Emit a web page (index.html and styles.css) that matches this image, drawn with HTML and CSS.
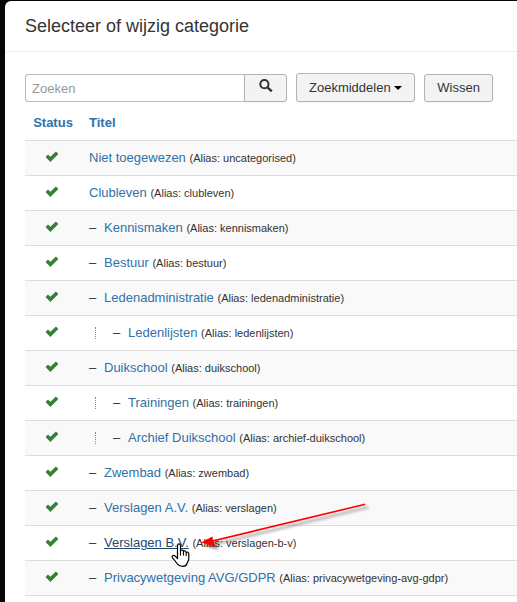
FILE: index.html
```html
<!DOCTYPE html>
<html lang="nl">
<head>
    <meta charset="UTF-8">
    <meta name="viewport" content="width=device-width, initial-scale=1.0">
    <title>Selecteer of wijzig categorie</title>
    <link rel="stylesheet" href="styles.css">
</head>
<body>

<!-- Check icon, used in every row -->
<svg class="sprite" aria-hidden="true">
    <symbol id="check" viewBox="0 0 14 12">
        <path d="M0.5 5.9 L3 3.4 L5.4 5.8 L10.9 0.6 L13.4 3 L5.4 10.9 Z" fill="#378137"/>
    </symbol>
</svg>

<div class="modal">
    <div class="modal-header">
        <h3>Selecteer of wijzig categorie</h3>
    </div>

    <div class="modal-body">
        <form class="filter-bar" onsubmit="return false">
            <div class="input-append">
                <input type="text" class="search-input" placeholder="Zoeken" aria-label="Zoeken">
                <button type="submit" class="btn btn-search" aria-label="Zoeken">
                    <svg width="14" height="14" viewBox="0 0 14 14" aria-hidden="true">
                        <circle cx="5.4" cy="5.2" r="4.1" fill="none" stroke="#333" stroke-width="2"/>
                        <path d="M8.5 8.3 L12.8 12.3" fill="none" stroke="#333" stroke-width="2.4"/>
                    </svg>
                </button>
            </div>
            <button type="button" class="btn btn-tools">Zoekmiddelen <span class="caret"></span></button>
            <button type="button" class="btn btn-clear">Wissen</button>
        </form>

        <table class="table">
            <thead>
                <tr>
                    <th class="status"><a href="#">Status</a></th>
                    <th><a href="#">Titel</a></th>
                </tr>
            </thead>
            <tbody>
                <tr>
                    <td class="status"><svg class="icon-check"><use href="#check"/></svg></td>
                    <td><a href="#">Niet toegewezen</a> <span class="small">(Alias: uncategorised)</span></td>
                </tr>
                <tr>
                    <td class="status"><svg class="icon-check"><use href="#check"/></svg></td>
                    <td><a href="#">Clubleven</a> <span class="small">(Alias: clubleven)</span></td>
                </tr>
                <tr>
                    <td class="status"><svg class="icon-check"><use href="#check"/></svg></td>
                    <td><span class="dash">–</span><a href="#">Kennismaken</a> <span class="small">(Alias: kennismaken)</span></td>
                </tr>
                <tr>
                    <td class="status"><svg class="icon-check"><use href="#check"/></svg></td>
                    <td><span class="dash">–</span><a href="#">Bestuur</a> <span class="small">(Alias: bestuur)</span></td>
                </tr>
                <tr>
                    <td class="status"><svg class="icon-check"><use href="#check"/></svg></td>
                    <td><span class="dash">–</span><a href="#">Ledenadministratie</a> <span class="small">(Alias: ledenadministratie)</span></td>
                </tr>
                <tr>
                    <td class="status"><svg class="icon-check"><use href="#check"/></svg></td>
                    <td><span class="level"></span><span class="dash">–</span><a href="#">Ledenlijsten</a> <span class="small">(Alias: ledenlijsten)</span></td>
                </tr>
                <tr>
                    <td class="status"><svg class="icon-check"><use href="#check"/></svg></td>
                    <td><span class="dash">–</span><a href="#">Duikschool</a> <span class="small">(Alias: duikschool)</span></td>
                </tr>
                <tr>
                    <td class="status"><svg class="icon-check"><use href="#check"/></svg></td>
                    <td><span class="level"></span><span class="dash">–</span><a href="#">Trainingen</a> <span class="small">(Alias: trainingen)</span></td>
                </tr>
                <tr>
                    <td class="status"><svg class="icon-check"><use href="#check"/></svg></td>
                    <td><span class="level"></span><span class="dash">–</span><a href="#">Archief Duikschool</a> <span class="small">(Alias: archief-duikschool)</span></td>
                </tr>
                <tr>
                    <td class="status"><svg class="icon-check"><use href="#check"/></svg></td>
                    <td><span class="dash">–</span><a href="#">Zwembad</a> <span class="small">(Alias: zwembad)</span></td>
                </tr>
                <tr>
                    <td class="status"><svg class="icon-check"><use href="#check"/></svg></td>
                    <td><span class="dash">–</span><a href="#">Verslagen A.V.</a> <span class="small">(Alias: verslagen)</span></td>
                </tr>
                <tr>
                    <td class="status"><svg class="icon-check"><use href="#check"/></svg></td>
                    <td class="pointed">
                        <span class="dash">–</span><a href="#" class="hovered">Verslagen B.V.</a> <span class="small">(Alias: verslagen-b-v)</span>
                        <!-- Arrow pointing at the hovered category -->
                        <svg class="arrow" width="180" height="56" viewBox="0 0 180 56" aria-hidden="true">
                            <defs>
                                <filter id="shadow" x="-10%" y="-20%" width="120%" height="150%">
                                    <feDropShadow dx="3" dy="3" stdDeviation="1.5" flood-color="#000" flood-opacity="0.45"/>
                                </filter>
                            </defs>
                            <g filter="url(#shadow)">
                                <path d="M11 40.2 L164 3.6 L164.5 5 L11 42 Z" fill="#f00"/>
                                <path d="M0 42.5 L11.5 36.5 L12 41 L14.5 46.5 Z" fill="#f00"/>
                            </g>
                        </svg>
                        <!-- Mouse pointer -->
                        <svg class="pointer" width="19" height="24" viewBox="0 0 19 24" aria-hidden="true">
                            <path d="M6.5 15.5 V2.6 C6.5 0.2 9.5 0.2 9.5 2.6 V7.8 C10.2 6.6 12.3 6.8 12.5 8.4 C13.4 7.5 15 8 15.2 9.4 C16.3 8.7 17.8 9.4 17.8 11 V15.5 C17.8 18 16.3 19 16 20.5 C15.5 22.4 14 23.3 11.8 23.3 C8 23.3 7 22.3 5.6 20 C4.2 17.7 3 16.3 1.5 14.8 C0.2 13.2 2.3 11.6 4 12.9 Z" fill="#fff" stroke="#000" stroke-width="1.2" stroke-linejoin="round"/>
                            <path d="M9.5 7.8 V12.5 M12.5 8.5 V12.5 M15.2 9.5 V13" fill="none" stroke="#000" stroke-width="1.1"/>
                        </svg>
                    </td>
                </tr>
                <tr>
                    <td class="status"><svg class="icon-check"><use href="#check"/></svg></td>
                    <td><span class="dash">–</span><a href="#">Privacywetgeving AVG/GDPR</a> <span class="small">(Alias: privacywetgeving-avg-gdpr)</span></td>
                </tr>
            </tbody>
        </table>
    </div>
</div>

</body>
</html>
```
FILE: styles.css
```css
body {
    margin: 0;
    padding: 1px 0 0 5px;
    font-family: "Liberation Sans", Arial, sans-serif;
    font-size: 13px;
    line-height: 18px;
    color: #333;
    background-color: #060606;
}

a {
    color: #3071a9;
    text-decoration: none;
}

.sprite {
    display: none;
}

/* Modal */
.modal {
    min-height: calc(100vh - 1px);
    background-color: #fff;
    border-radius: 6px 0 0 0;
}

.modal-header {
    padding: 10px 20px;
    border-bottom: 1px solid #eee;
}

.modal-header h3 {
    margin: 0;
    font-size: 18px;
    font-weight: normal;
    line-height: 30px;
}

.modal-body {
    padding: 21px 0 0 20px;
}

/* Filter bar */
.filter-bar {
    display: flex;
    align-items: flex-end;
    gap: 9px;
    margin-bottom: 7px;
}

.input-append {
    display: flex;
}

.search-input {
    box-sizing: border-box;
    width: 219px;
    height: 28px;
    padding: 4px 6px;
    border: 1px solid #bbb;
    border-right: 0;
    border-radius: 3px 0 0 3px;
    font: inherit;
    color: #555;
}

.search-input::placeholder {
    color: #999;
}

.btn {
    box-sizing: border-box;
    height: 28px;
    padding: 0 12px;
    border: 1px solid #b3b3b3;
    border-radius: 3px;
    background-color: #f3f3f3;
    font: inherit;
    color: #333;
    cursor: pointer;
    box-shadow: 0 1px 2px rgba(0, 0, 0, 0.05);
}

.btn-search {
    width: 43px;
    border-radius: 0 3px 3px 0;
}

.btn-tools {
    height: 29px;
}

.caret {
    display: inline-block;
    vertical-align: middle;
    border-top: 4px solid #000;
    border-left: 4px solid transparent;
    border-right: 4px solid transparent;
}

/* Category list */
.table {
    width: 100%;
    border-collapse: collapse;
}

.table th,
.table td {
    padding: 8px;
    line-height: 18px;
    text-align: left;
    white-space: nowrap;
}

.table th {
    padding: 5px 8px 8px;
}

.table td {
    border-top: 1px solid #ddd;
}

.table tbody tr:nth-child(odd) {
    background-color: #f9f9f9;
}

.table tbody tr:last-child {
    border-bottom: 1px solid #ddd;
}

.table .status {
    width: 40px;
    text-align: center;
}

.icon-check {
    width: 14px;
    height: 12px;
    margin-right: 3px;
    vertical-align: -1px;
}

.small {
    font-size: 11px;
}

.dash {
    display: inline-block;
    width: 15px;
}

/* Dotted guide for nested categories */
.level {
    display: inline-block;
    width: 17px;
    height: 12px;
    margin-left: 6px;
    border-left: 1px dotted #888;
    vertical-align: -2px;
}

.hovered {
    color: #1f496e;
    text-decoration: underline;
}

.pointed {
    position: relative;
}

.arrow {
    position: absolute;
    left: 120px;
    top: -26px;
}

.pointer {
    position: absolute;
    left: 90px;
    top: 17px;
}
```
